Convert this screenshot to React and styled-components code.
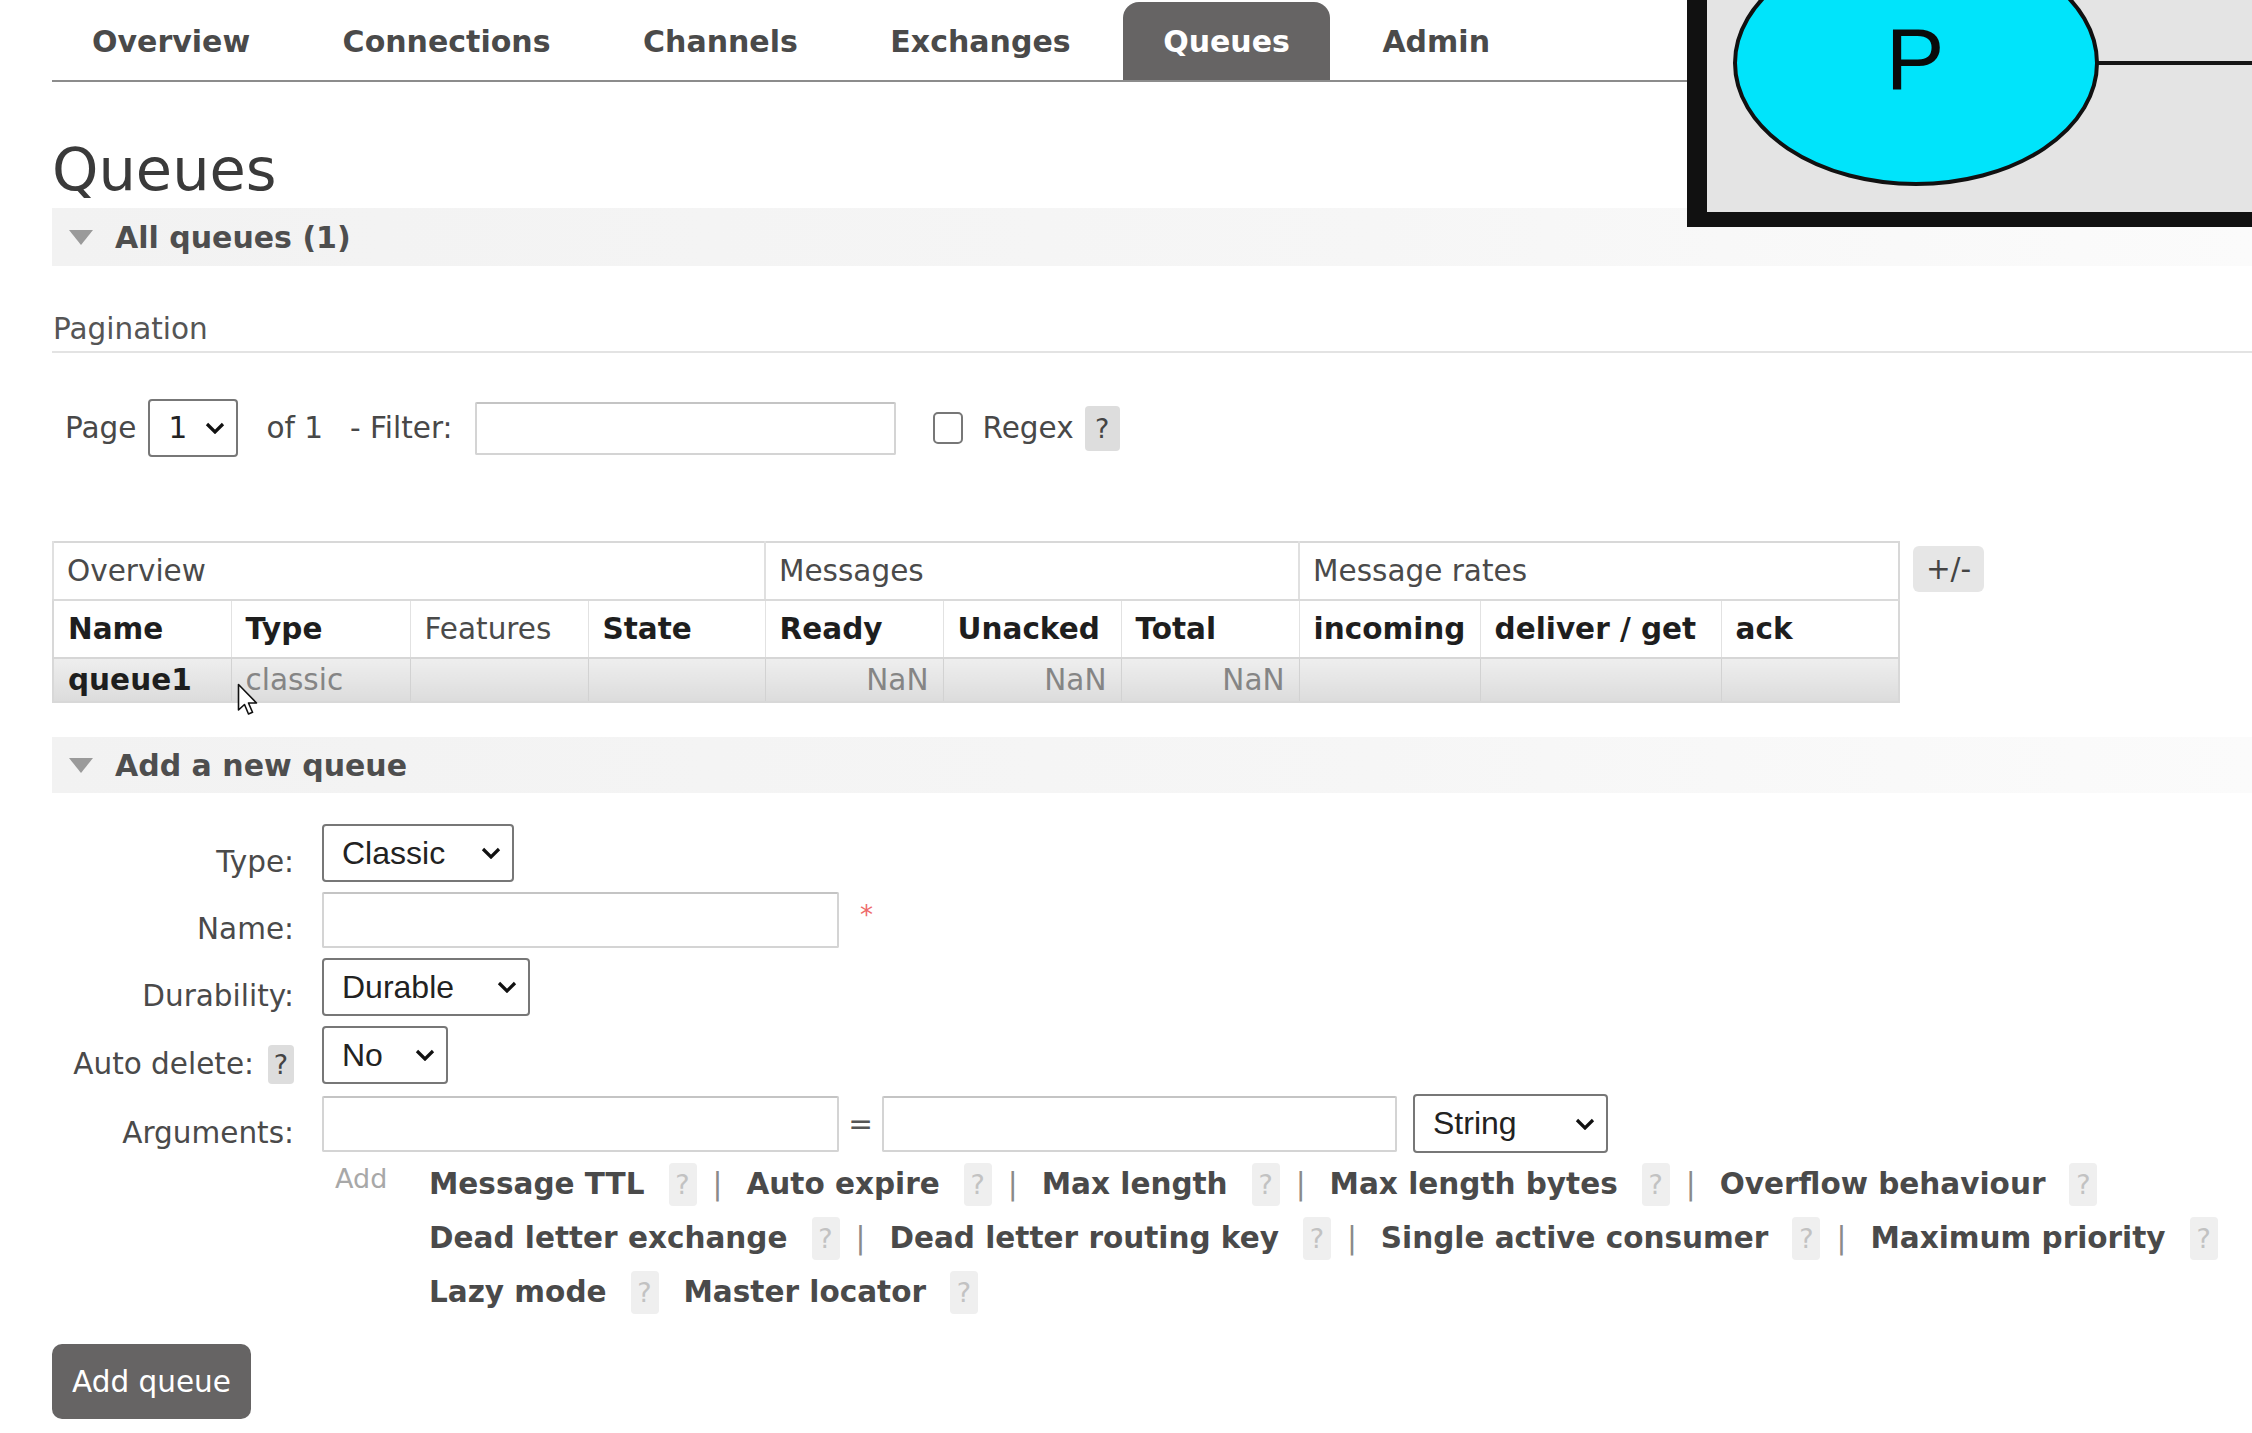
import React from "react";
import styled, { createGlobalStyle } from "styled-components";

const GlobalStyle = createGlobalStyle`
  html, body {
    margin: 0;
    padding: 0;
    background: #fff;
  }
  body {
    font-family: "DejaVu Sans", Verdana, sans-serif;
    font-size: 29.5px;
    color: #484848;
  }
  * { box-sizing: border-box; }
`;

const Page = styled.div`
  position: relative;
  width: 2252px;
  min-height: 1433px;
  overflow: hidden;
  padding-left: 52px;
`;

const Menu = styled.ul`
  display: flex;
  gap: 12.5px;
  margin: 0;
  padding: 2px 0 0;
  list-style: none;
  border-bottom: 2px solid #8c8c8c;
`;

const Tab = styled.li`
  height: 78px;
  padding: 0 40px;
  display: flex;
  align-items: center;
  font-size: 30px;
  font-weight: bold;
  color: ${(p) => (p.$active ? "#fff" : "#4a4a4a")};
  background: ${(p) => (p.$active ? "#666464" : "transparent")};
  border-radius: 16px 16px 0 0;
`;

const Title = styled.h1`
  margin: 53px 0 3px;
  font-size: 59px;
  line-height: 70px;
  font-weight: normal;
  color: #3a3a3a;
`;

const SectionBar = styled.div`
  height: ${(p) => p.$h || 58}px;
  margin-top: ${(p) => p.$mt || 0}px;
  display: flex;
  align-items: center;
  gap: 22px;
  padding-left: 17px;
  font-size: 30px;
  font-weight: bold;
  color: #4e4e4e;
  background: linear-gradient(90deg, #f2f2f2, #f6f6f6 60%, #fbfbfb);
`;

const Arrow = () => (
  <svg width="24" height="15" viewBox="0 0 24 15">
    <polygon points="0,0 24,0 12,15" fill="#9a9a9a" />
  </svg>
);

const SubHeading = styled.div`
  margin-top: 46px;
  padding: 0 0 5px 1px;
  line-height: 34px;
  color: #555;
  border-bottom: 2px solid #e3e3e3;
`;

const PagerRow = styled.div`
  margin-top: 46px;
  height: 58px;
  display: flex;
  align-items: center;
  padding-left: 13px;
`;

const Text = styled.span`
  margin-left: ${(p) => p.$ml || 0}px;
  color: ${(p) => p.$color || "#484848"};
  white-space: nowrap;
`;

const SelectBox = styled.div`
  width: ${(p) => p.$w}px;
  height: ${(p) => p.$h || 58}px;
  margin-left: ${(p) => p.$ml || 0}px;
  display: flex;
  align-items: center;
  justify-content: space-between;
  padding: 0 11px 0 ${(p) => p.$pl || 18}px;
  border: 2px solid #777;
  border-radius: 4px;
  background: #fff;
  font-family: ${(p) => (p.$sys ? '"Liberation Sans", Arial, sans-serif' : "inherit")};
  font-size: ${(p) => (p.$sys ? 32 : 29.5)}px;
  color: #222;
  flex-shrink: 0;
`;

const Chevron = () => (
  <svg width="20" height="12" viewBox="0 0 20 12">
    <polyline points="2,2 10,10 18,2" fill="none" stroke="#111" strokeWidth="3.2" />
  </svg>
);

const Select = ({ value, ...rest }) => (
  <SelectBox {...rest}>
    <span>{value}</span>
    <Chevron />
  </SelectBox>
);

const Input = styled.div`
  width: ${(p) => p.$w}px;
  height: ${(p) => p.$h || 56}px;
  margin-left: ${(p) => p.$ml || 0}px;
  border: 2px solid #d4d4d4;
  border-top-color: #c4c4c4;
  border-radius: 2px;
  background: #fff;
  flex-shrink: 0;
`;

const Checkbox = styled.div`
  width: 30px;
  height: 32px;
  margin-left: ${(p) => p.$ml || 0}px;
  border: 2px solid #777;
  border-radius: 5px;
  background: #fff;
`;

const Help = styled.span`
  display: inline-flex;
  align-items: center;
  justify-content: center;
  width: ${(p) => p.$w || 28}px;
  height: ${(p) => p.$h || 43}px;
  margin-left: ${(p) => p.$ml || 0}px;
  border-radius: 4px;
  background: ${(p) => (p.$faint ? "#efefef" : "#dddddd")};
  color: ${(p) => (p.$faint ? "#c2c2c2" : "#444")};
  font-size: 27px;
  font-weight: normal;
  flex-shrink: 0;
`;

const TableRow = styled.div`
  margin-top: 84px;
  display: flex;
  align-items: flex-start;
  gap: 13px;
`;

const Table = styled.table`
  width: 1846px;
  table-layout: fixed;
  border-collapse: collapse;
  border: 2px solid #d8d8d8;
`;

const GroupTh = styled.th`
  height: 58px;
  padding: 0 13px;
  text-align: left;
  font-weight: normal;
  font-size: 29.5px;
  color: #4a4a4a;
  border-left: 2px solid #e0e0e0;
  border-bottom: 2px solid #dadada;
`;

const ColTh = styled.th`
  height: 58px;
  padding: 0 14px;
  text-align: left;
  font-size: 29.5px;
  white-space: nowrap;
  overflow: hidden;
  font-weight: ${(p) => (p.$plain ? "normal" : "bold")};
  color: ${(p) => (p.$plain ? "#4a4a4a" : "#1e1e1e")};
  border-left: 1px solid #e2e2e2;
  border-bottom: 2px solid #d6d6d6;
`;

const Td = styled.td`
  height: 44px;
  padding: 0 ${(p) => (p.$num ? 14 : 15)}px 0 14px;
  text-align: ${(p) => (p.$num ? "right" : "left")};
  font-size: 29.5px;
  font-weight: ${(p) => (p.$strong ? "bold" : "normal")};
  color: ${(p) => (p.$strong ? "#1e1e1e" : "#858585")};
  background: linear-gradient(#eeeeee, #dcdcdc);
  border-left: 1px solid #d2d2d2;
`;

const ToggleButton = styled.div`
  margin-top: 5px;
  width: 71px;
  height: 46px;
  display: flex;
  align-items: center;
  justify-content: center;
  border-radius: 6px;
  background: #e6e6e6;
  color: #444;
`;

const FormGrid = styled.div`
  margin-top: 31px;
  display: grid;
  grid-template-columns: 242px 1fr;
  column-gap: 28px;
  row-gap: 10px;
  align-items: center;
`;

const Label = styled.div`
  display: flex;
  justify-content: flex-end;
  align-items: center;
  gap: 14px;
  padding-top: 18px;
  color: #4a4a4a;
  white-space: nowrap;
`;

const Field = styled.div`
  display: flex;
  align-items: center;
`;

const Required = styled.span`
  align-self: flex-start;
  margin: 8px 0 0 21px;
  color: #ee6a6a;
  font-size: 26px;
`;

const EqSign = styled.span`
  width: 43px;
  text-align: center;
  color: #555;
`;

const AddArea = styled.div`
  grid-column: 2;
  display: flex;
  align-items: flex-start;
  margin-top: -6px;
`;

const AddWord = styled.span`
  width: 107px;
  padding: 6px 0 0 13px;
  color: #a8a8a8;
  font-size: 27px;
`;

const LinkRows = styled.div`
  display: flex;
  flex-direction: column;
`;

const LinkRow = styled.div`
  height: 54px;
  display: flex;
  align-items: center;
  white-space: nowrap;
  font-size: 29.5px;
`;

const LinkName = styled.span`
  font-weight: bold;
  color: #4a4a4a;
`;

const Sep = styled.span`
  margin: 0 24px 0 16px;
  color: #8a8a8a;
`;

const PrimaryButton = styled.div`
  margin-top: 25px;
  width: 199px;
  height: 75px;
  display: flex;
  align-items: center;
  justify-content: center;
  border-radius: 10px;
  background: #666464;
  color: #fff;
`;

const VideoInset = styled.div`
  position: absolute;
  top: 0;
  left: 1687px;
  width: 565px;
  height: 227px;
  border-left: 20px solid #111;
  border-bottom: 15px solid #111;
  background: #e4e4e4;
  overflow: hidden;
`;

const Pointer = styled.svg`
  position: absolute;
  left: 237px;
  top: 683px;
`;

const tabs = ["Overview", "Connections", "Channels", "Exchanges", "Queues", "Admin"];

const argRows = [
  ["Message TTL", "Auto expire", "Max length", "Max length bytes", "Overflow behaviour"],
  ["Dead letter exchange", "Dead letter routing key", "Single active consumer", "Maximum priority"],
];

const ArgLinks = ({ items, separated = true }) => (
  <LinkRow>
    {items.map((name, i) => (
      <React.Fragment key={name}>
        {i > 0 && (separated ? <Sep>|</Sep> : <Text $ml={25} />)}
        <LinkName>{name}</LinkName>
        <Help $faint $ml={24}>?</Help>
      </React.Fragment>
    ))}
  </LinkRow>
);

const App = () => {
  return (
    <Page>
      <GlobalStyle />
      <Menu>
        {tabs.map((t) => (
          <Tab key={t} $active={t === "Queues"}>
            {t}
          </Tab>
        ))}
      </Menu>

      <Title>Queues</Title>
      <SectionBar>
        <Arrow />
        All queues (1)
      </SectionBar>

      <SubHeading>Pagination</SubHeading>
      <PagerRow>
        <Text>Page</Text>
        <Select value="1" $w={90} $ml={12} $pl={18} />
        <Text $ml={28}>of 1</Text>
        <Text $ml={27}>- Filter:</Text>
        <Input $w={421} $h={53} $ml={22} />
        <Checkbox $ml={37} />
        <Text $ml={20}>Regex</Text>
        <Help $w={35} $h={45} $ml={11}>?</Help>
      </PagerRow>

      <TableRow>
        <Table>
          <colgroup>
            {[178, 179, 178, 177, 178, 178, 178, 181, 241, 178].map((w, i) => (
              <col key={i} style={{ width: w }} />
            ))}
          </colgroup>
          <thead>
            <tr>
              <GroupTh colSpan={4}>Overview</GroupTh>
              <GroupTh colSpan={3}>Messages</GroupTh>
              <GroupTh colSpan={3}>Message rates</GroupTh>
            </tr>
            <tr>
              <ColTh>Name</ColTh>
              <ColTh>Type</ColTh>
              <ColTh $plain>Features</ColTh>
              <ColTh>State</ColTh>
              <ColTh>Ready</ColTh>
              <ColTh>Unacked</ColTh>
              <ColTh>Total</ColTh>
              <ColTh>incoming</ColTh>
              <ColTh>deliver / get</ColTh>
              <ColTh>ack</ColTh>
            </tr>
          </thead>
          <tbody>
            <tr>
              <Td $strong>queue1</Td>
              <Td>classic</Td>
              <Td />
              <Td />
              <Td $num>NaN</Td>
              <Td $num>NaN</Td>
              <Td $num>NaN</Td>
              <Td />
              <Td />
              <Td />
            </tr>
          </tbody>
        </Table>
        <ToggleButton>+/-</ToggleButton>
      </TableRow>

      <SectionBar $mt={34} $h={56}>
        <Arrow />
        Add a new queue
      </SectionBar>

      <FormGrid>
        <Label>Type:</Label>
        <Field>
          <Select value="Classic" $sys $w={192} />
        </Field>

        <Label>Name:</Label>
        <Field>
          <Input $w={517} />
          <Required>*</Required>
        </Field>

        <Label>Durability:</Label>
        <Field>
          <Select value="Durable" $sys $w={208} />
        </Field>

        <Label>
          Auto delete:
          <Help $w={26} $h={39}>?</Help>
        </Label>
        <Field>
          <Select value="No" $sys $w={126} />
        </Field>

        <Label>Arguments:</Label>
        <Field>
          <Input $w={517} />
          <EqSign>=</EqSign>
          <Input $w={515} />
          <Select value="String" $sys $w={195} $h={59} $ml={16} />
        </Field>

        <AddArea>
          <AddWord>Add</AddWord>
          <LinkRows>
            {argRows.map((row, i) => (
              <ArgLinks key={i} items={row} />
            ))}
            <ArgLinks items={["Lazy mode", "Master locator"]} separated={false} />
          </LinkRows>
        </AddArea>
      </FormGrid>

      <PrimaryButton>Add queue</PrimaryButton>

      <Pointer width="22" height="34" viewBox="0 0 22 34">
        <path d="M1.5 1.5 L1.5 27 L7.5 21.5 L11.5 31 L15.5 29.3 L11.5 20 L19.5 20 Z" fill="#fff" stroke="#111" strokeWidth="1.6" strokeLinejoin="round" />
      </Pointer>

      <VideoInset>
        <svg width="545" height="212" viewBox="0 0 545 212">
          <line x1="385" y1="63" x2="545" y2="63" stroke="#151515" strokeWidth="4" />
          <ellipse cx="209" cy="63" rx="181" ry="121" fill="#00e4fb" stroke="#111" strokeWidth="4" />
          <text x="208" y="89" textAnchor="middle" fontFamily="Liberation Sans, Arial, sans-serif" fontSize="88" fill="#0a0a0a">
            P
          </text>
        </svg>
      </VideoInset>
    </Page>
  );
};

export default App;
